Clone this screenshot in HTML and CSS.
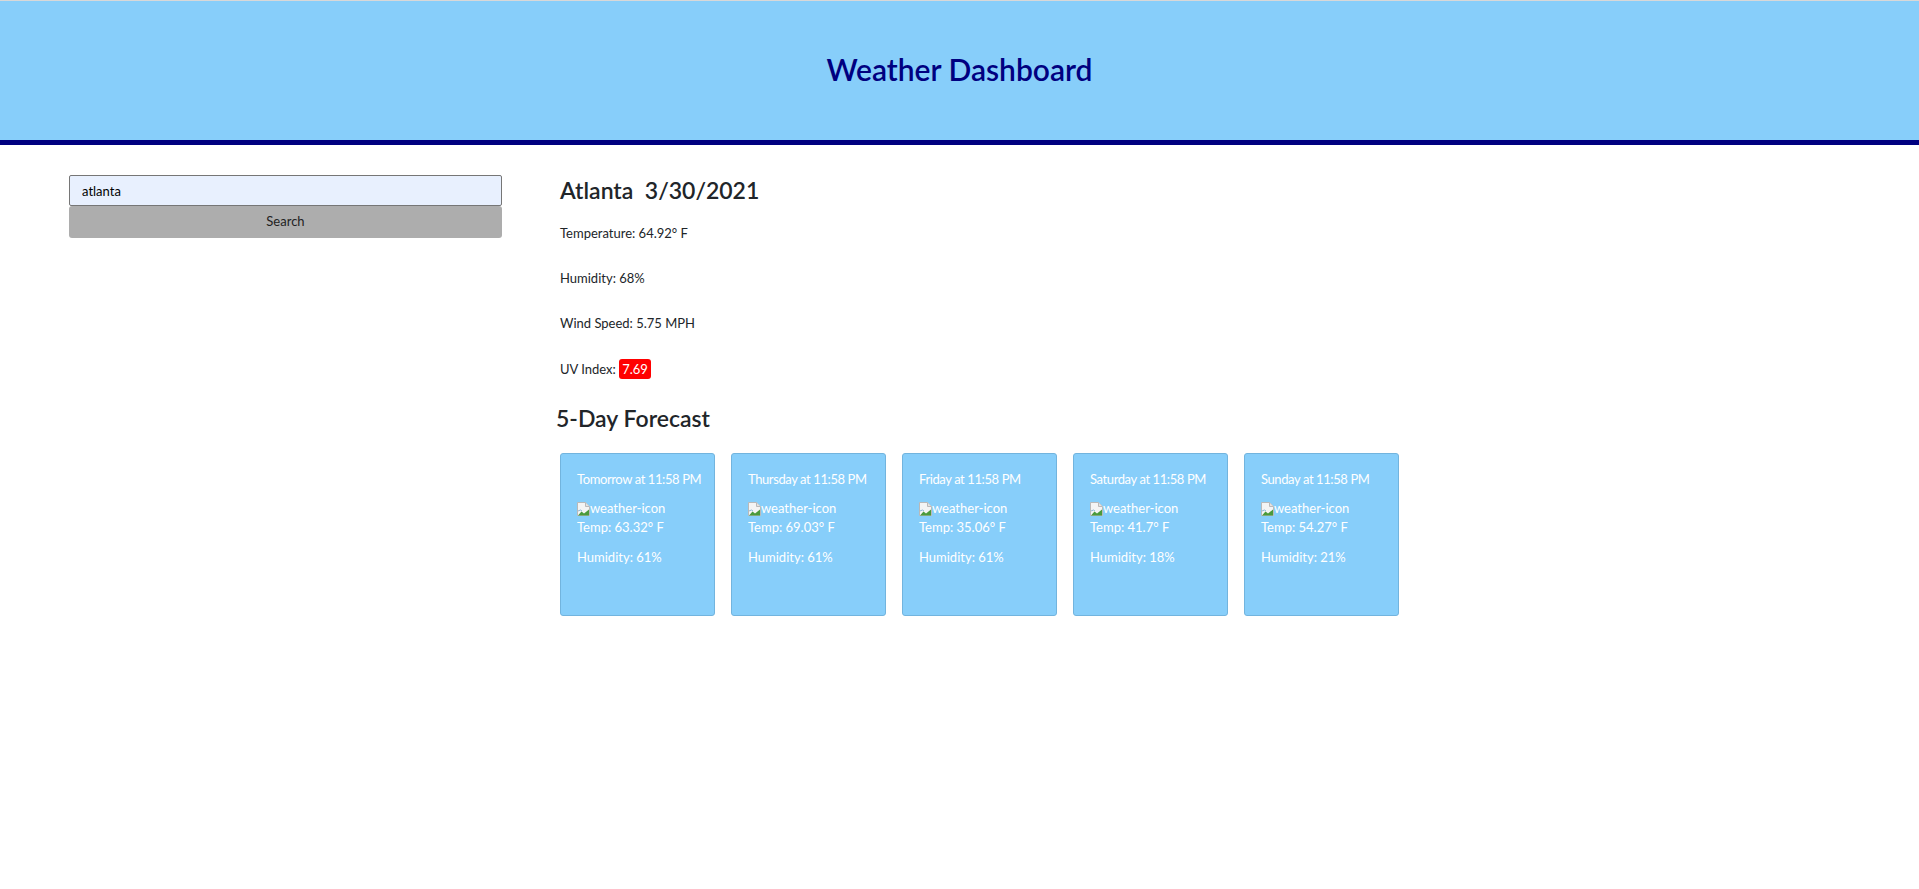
FILE: index.html
```html
<!DOCTYPE html>
<html lang="en">
<head>
<meta charset="utf-8">
<title>Weather Dashboard</title>
<link rel="stylesheet" href="styles.css">
</head>
<body>
<header class="site-header">
  <h1 class="site-title">Weather Dashboard</h1>
</header>
<div class="page">
  <aside class="sidebar">
    <input class="search-input" type="text" value="atlanta">
    <button class="search-btn" type="button">Search</button>
  </aside>
  <main class="content">
    <h2 class="city-title">Atlanta&nbsp;&nbsp;3/30/2021</h2>
    <p class="info">Temperature: 64.92° F</p>
    <p class="info">Humidity: 68%</p>
    <p class="info">Wind Speed: 5.75 MPH</p>
    <p class="info">UV Index: <span class="uv-badge">7.69</span></p>
    <h2 class="forecast-title">5-Day Forecast</h2>
    <div class="cards">
      <div class="card">
        <p class="card-date">Tomorrow at 11:58 PM</p>
        <div class="card-icon"><svg class="broken" width="13" height="14" viewBox="0 0 13 14"><path d="M0.5 0.5H8.5L12.5 4.5V13.5H0.5Z" fill="#f4f4f4" stroke="#b9b9b9"/><path d="M8.5 0.5V4.5H12.5" fill="#e2e2e2" stroke="#b9b9b9"/><path d="M1 13.5L4.5 9.5L7 11.5L12 7.5V13.5Z" fill="#4a9a3b"/><path d="M1 9L3.5 8L5 9" fill="none" stroke="#8bb8d8"/></svg>weather-icon</div>
        <p class="card-line">Temp: 63.32° F</p>
        <p class="card-line">Humidity: 61%</p>
      </div>
      <div class="card">
        <p class="card-date">Thursday at 11:58 PM</p>
        <div class="card-icon"><svg class="broken" width="13" height="14" viewBox="0 0 13 14"><path d="M0.5 0.5H8.5L12.5 4.5V13.5H0.5Z" fill="#f4f4f4" stroke="#b9b9b9"/><path d="M8.5 0.5V4.5H12.5" fill="#e2e2e2" stroke="#b9b9b9"/><path d="M1 13.5L4.5 9.5L7 11.5L12 7.5V13.5Z" fill="#4a9a3b"/><path d="M1 9L3.5 8L5 9" fill="none" stroke="#8bb8d8"/></svg>weather-icon</div>
        <p class="card-line">Temp: 69.03° F</p>
        <p class="card-line">Humidity: 61%</p>
      </div>
      <div class="card">
        <p class="card-date">Friday at 11:58 PM</p>
        <div class="card-icon"><svg class="broken" width="13" height="14" viewBox="0 0 13 14"><path d="M0.5 0.5H8.5L12.5 4.5V13.5H0.5Z" fill="#f4f4f4" stroke="#b9b9b9"/><path d="M8.5 0.5V4.5H12.5" fill="#e2e2e2" stroke="#b9b9b9"/><path d="M1 13.5L4.5 9.5L7 11.5L12 7.5V13.5Z" fill="#4a9a3b"/><path d="M1 9L3.5 8L5 9" fill="none" stroke="#8bb8d8"/></svg>weather-icon</div>
        <p class="card-line">Temp: 35.06° F</p>
        <p class="card-line">Humidity: 61%</p>
      </div>
      <div class="card">
        <p class="card-date">Saturday at 11:58 PM</p>
        <div class="card-icon"><svg class="broken" width="13" height="14" viewBox="0 0 13 14"><path d="M0.5 0.5H8.5L12.5 4.5V13.5H0.5Z" fill="#f4f4f4" stroke="#b9b9b9"/><path d="M8.5 0.5V4.5H12.5" fill="#e2e2e2" stroke="#b9b9b9"/><path d="M1 13.5L4.5 9.5L7 11.5L12 7.5V13.5Z" fill="#4a9a3b"/><path d="M1 9L3.5 8L5 9" fill="none" stroke="#8bb8d8"/></svg>weather-icon</div>
        <p class="card-line">Temp: 41.7° F</p>
        <p class="card-line">Humidity: 18%</p>
      </div>
      <div class="card">
        <p class="card-date">Sunday at 11:58 PM</p>
        <div class="card-icon"><svg class="broken" width="13" height="14" viewBox="0 0 13 14"><path d="M0.5 0.5H8.5L12.5 4.5V13.5H0.5Z" fill="#f4f4f4" stroke="#b9b9b9"/><path d="M8.5 0.5V4.5H12.5" fill="#e2e2e2" stroke="#b9b9b9"/><path d="M1 13.5L4.5 9.5L7 11.5L12 7.5V13.5Z" fill="#4a9a3b"/><path d="M1 9L3.5 8L5 9" fill="none" stroke="#8bb8d8"/></svg>weather-icon</div>
        <p class="card-line">Temp: 54.27° F</p>
        <p class="card-line">Humidity: 21%</p>
      </div>
    </div>
  </main>
</div>
</body>
</html>
```
FILE: styles.css
```css
* { box-sizing: border-box; }

body {
  margin: 0;
  font-family: Lato, "Open Sans", sans-serif;
  font-size: 13px;
  line-height: 19.2px;
  color: #212529;
  background: #fff;
}

.site-header {
  height: 145px;
  padding-bottom: 4px;
  border-top: 1px solid #d8d8d8;
  border-bottom: 5px solid #000080;
  background: #87cefa;
  display: flex;
  align-items: center;
  justify-content: center;
}

.site-title {
  margin: 0;
  font-size: 30px;
  font-weight: 600;
  line-height: 1.2;
  color: #000080;
}

.page {
  display: flex;
  align-items: flex-start;
  gap: 58px;
  padding: 30px 0 0 69px;
}

.sidebar {
  width: 433px;
  display: flex;
  flex-direction: column;
}

.search-input {
  height: 31px;
  padding: 0 12px;
  border: 1px solid #767676;
  border-radius: 2px;
  background: #e8f0fe;
  font: inherit;
  color: #000;
  outline: none;
}

.search-btn {
  height: 32px;
  border: none;
  border-radius: 3px;
  background: #adadad;
  font: inherit;
  color: #222;
}

.content {
  flex: 1;
}

.city-title,
.forecast-title {
  font-size: 23px;
  font-weight: 600;
  line-height: 27px;
}

.city-title {
  margin: 2px 0 20px;
}

.info {
  margin: 0 0 26px;
}

.uv-badge {
  padding: 2px 3px;
  border-radius: 3px;
  background: #ff0000;
  color: #fff;
}

.forecast-title {
  margin: 2px 0 21px -4px;
}

.cards {
  display: flex;
  gap: 16px;
}

.card {
  width: 155px;
  height: 163px;
  padding: 16px 16px;
  border: 1px solid #72b4de;
  border-radius: 3px;
  background: #87cefa;
  color: #fff;
}

.card-date {
  margin: 0 0 10px;
  white-space: nowrap;
  letter-spacing: -0.4px;
}

.card-icon {
  display: flex;
  align-items: flex-end;
  height: 19px;
  white-space: nowrap;
}

.broken {
  margin-bottom: 2px;
}

.card-line {
  margin: 0 0 11px;
}
```
